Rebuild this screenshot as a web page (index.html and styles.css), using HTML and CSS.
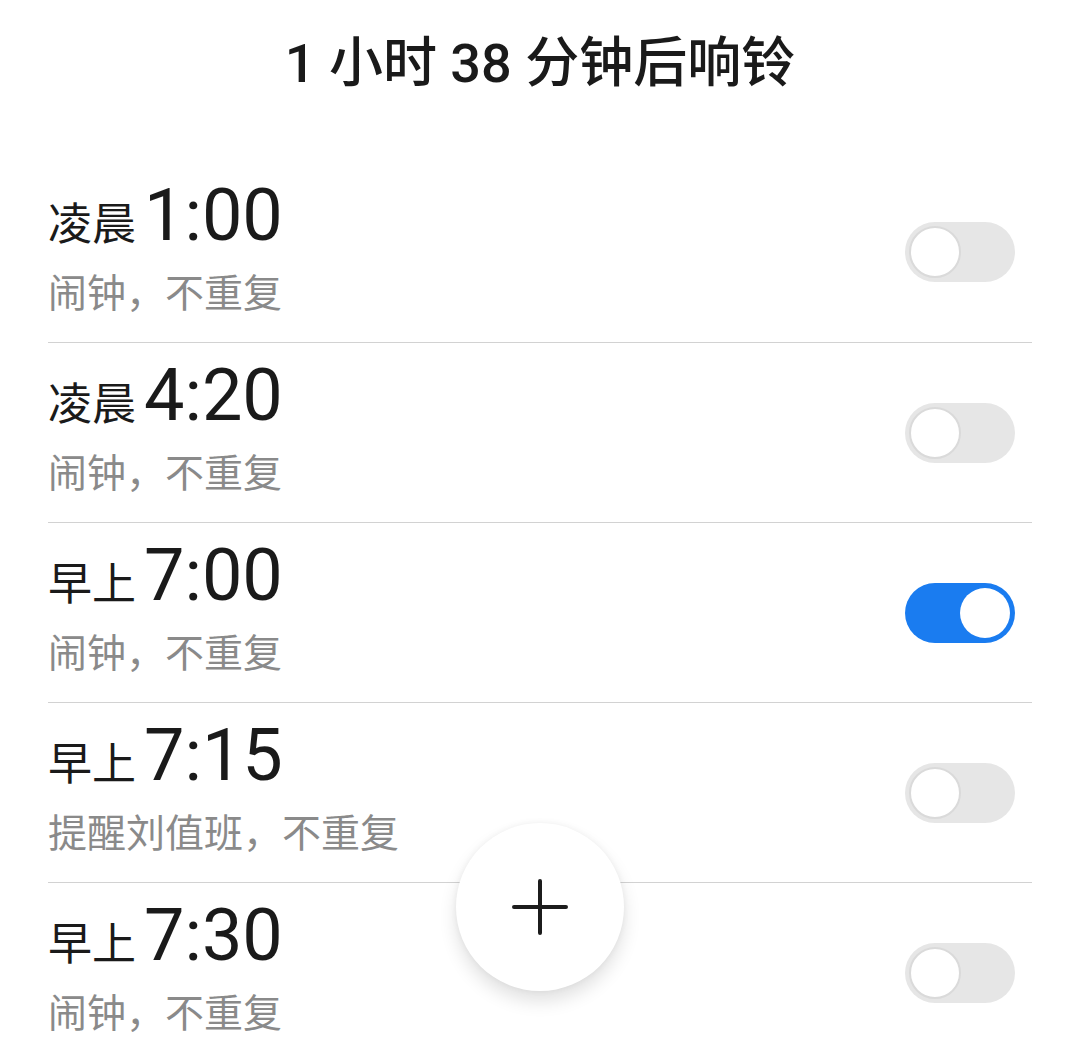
FILE: index.html
```html
<!DOCTYPE html>
<html lang="zh-CN">
<head>
<meta charset="utf-8">
<link rel="stylesheet" href="styles.css">
</head>
<body>
<div class="screen">
  <header class="header">
    <h1 class="title">1 小时 38 分钟后响铃</h1>
  </header>
  <ul class="list">
    <li class="row">
      <div class="info">
        <div class="time"><span class="period">凌晨</span><span class="clock">1:00</span></div>
        <div class="desc">闹钟，不重复</div>
      </div>
      <span class="switch"><span class="knob"></span></span>
    </li>
    <li class="row">
      <div class="info">
        <div class="time"><span class="period">凌晨</span><span class="clock">4:20</span></div>
        <div class="desc">闹钟，不重复</div>
      </div>
      <span class="switch"><span class="knob"></span></span>
    </li>
    <li class="row">
      <div class="info">
        <div class="time"><span class="period">早上</span><span class="clock">7:00</span></div>
        <div class="desc">闹钟，不重复</div>
      </div>
      <span class="switch on"><span class="knob"></span></span>
    </li>
    <li class="row">
      <div class="info">
        <div class="time"><span class="period">早上</span><span class="clock">7:15</span></div>
        <div class="desc">提醒刘值班，不重复</div>
      </div>
      <span class="switch"><span class="knob"></span></span>
    </li>
    <li class="row">
      <div class="info">
        <div class="time"><span class="period">早上</span><span class="clock">7:30</span></div>
        <div class="desc">闹钟，不重复</div>
      </div>
      <span class="switch"><span class="knob"></span></span>
    </li>
  </ul>
  <button class="fab" aria-label="添加闹钟">
    <svg width="56" height="56" viewBox="0 0 56 56"><path d="M28 2V54M2 28H54" stroke="#1c1c1c" stroke-width="4" stroke-linecap="round" fill="none"/></svg>
  </button>
</div>
</body>
</html>
```
FILE: styles.css
```css
html, body {
  margin: 0;
  padding: 0;
  background: #ffffff;
}
body {
  font-family: Roboto, "Noto Sans CJK SC", "Noto Sans", sans-serif;
  color: #1a1a1a;
}
.screen {
  position: relative;
  width: 1080px;
  height: 1039px;
  overflow: hidden;
}
.header {
  height: 162px;
  display: flex;
  justify-content: center;
  box-sizing: border-box;
  padding-top: 28px;
}
.title {
  margin: 0;
  font-size: 54px;
  font-weight: 500;
  line-height: 72px;
  color: #1a1a1a;
}
.list {
  list-style: none;
  margin: 0 48px;
  padding: 0;
}
.row {
  height: 180px;
  display: flex;
  align-items: center;
  justify-content: space-between;
  border-top: 1.5px solid #d2d2d2;
  box-sizing: border-box;
}
.row:first-child {
  border-top: none;
}
.info {
  display: flex;
  flex-direction: column;
}
.time {
  display: flex;
  align-items: baseline;
  line-height: 74px;
}
.period {
  font-size: 44px;
  margin-right: 8px;
}
.clock {
  font-size: 72px;
  letter-spacing: 0;
}
.desc {
  font-size: 39px;
  line-height: 64px;
  color: #8a8a8a;
}
.switch {
  position: relative;
  width: 110px;
  height: 60px;
  border-radius: 30px;
  background: #e6e6e6;
  margin-right: 17px;
  flex: none;
}
.knob {
  position: absolute;
  left: 4px;
  top: 4px;
  width: 48px;
  height: 48px;
  border-radius: 50%;
  background: #ffffff;
  border: 2px solid #dadada;
}
.switch.on {
  background: #1a7cf0;
}
.switch.on .knob {
  left: auto;
  right: 5px;
  top: 5px;
  width: 50px;
  height: 50px;
  border: none;
}
.fab {
  position: absolute;
  left: 456px;
  top: 823px;
  width: 168px;
  height: 168px;
  border-radius: 50%;
  border: none;
  background: #ffffff;
  box-shadow: 0 10px 18px rgba(0, 0, 0, 0.12), 0 0 6px rgba(0, 0, 0, 0.05);
  display: flex;
  align-items: center;
  justify-content: center;
  padding: 0;
}
```
